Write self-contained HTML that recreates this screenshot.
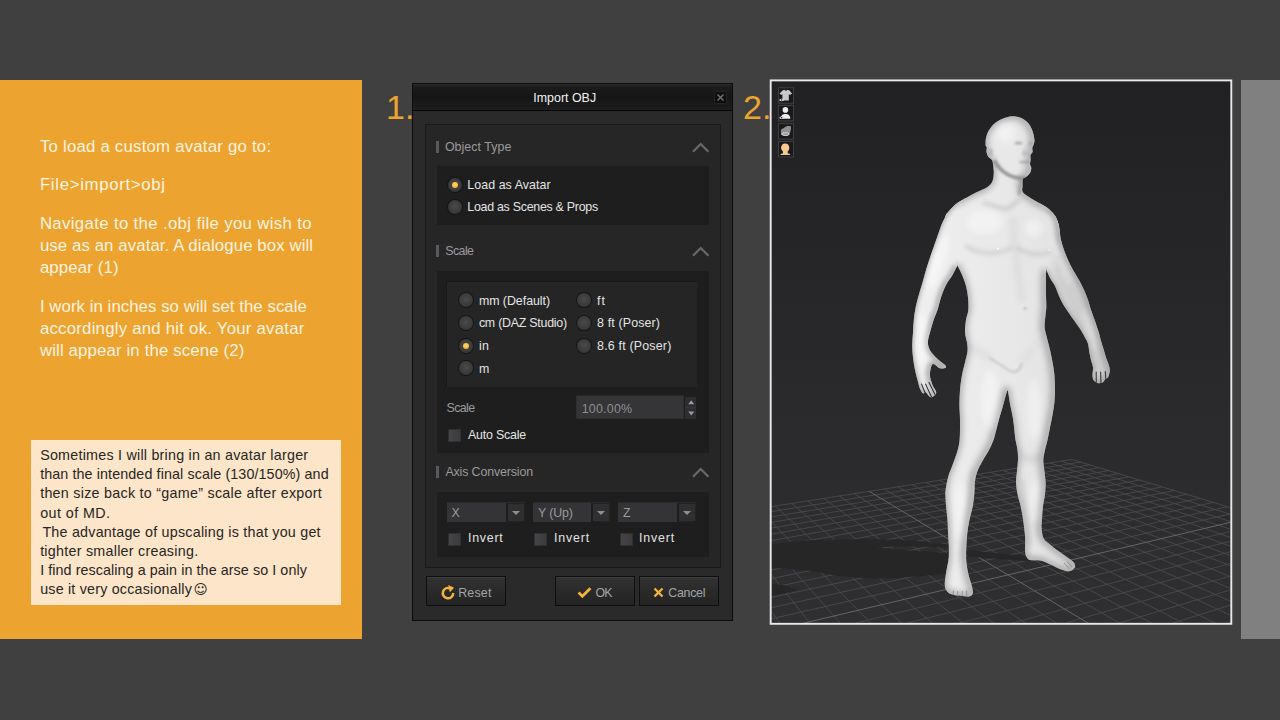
<!DOCTYPE html>
<html lang="en">
<head>
<meta charset="utf-8">
<title>Import OBJ avatar</title>
<style>
*{box-sizing:border-box;margin:0;padding:0}
html,body{width:1280px;height:720px;overflow:hidden;background:#404040}
body{position:relative;font-family:"Liberation Sans",sans-serif}
.abs{position:absolute}
#orange{left:0;top:80px;width:362px;height:559px;background:#eda32f}
#rightbar{left:1241px;top:80px;width:39px;height:559px;background:#808080}
.ln{position:absolute;left:40px;white-space:nowrap;color:#fdf3e1;font-size:16.8px;line-height:22px;height:22px;transform-origin:0 50%}
#cream{left:31px;top:440px;width:310px;height:165px;background:#fce5c8}
.cl{position:absolute;left:9px;white-space:nowrap;color:#262626;font-size:14.3px;line-height:19px;height:19px;transform-origin:0 50%}
.num{position:absolute;color:#eda32f;font-size:34px;line-height:32px;white-space:nowrap;transform-origin:0 50%}
/* dialog */
#dlg{left:412px;top:83px;width:321px;height:538px;background:#2a2a2b;border:1px solid #0c0c0c;font-size:12px;color:#dcdcdc}
#dlg .t{position:absolute;white-space:nowrap;line-height:14px;height:14px;transform-origin:0 50%}
#title{left:0;top:0;width:319px;height:27px;background:linear-gradient(#2a2a2b 0,#1c1c1d 10%,#151516 50%,#1e1e1f);border-bottom:1px solid #080808}
#inner{left:12px;top:40px;width:296px;height:444px;background:#262627;border:1px solid #1a1a1b}
.sub{position:absolute;background:#1e1e1f}
.grp{position:absolute;background:#252526;border-top:1px solid #181819;border-left:1px solid #181819}
.bar{position:absolute;width:3px;height:12px;background:#5a5a5c}
.sec{color:#9c9c9e}
.radio{position:absolute;width:14px;height:14px;border-radius:50%;background:radial-gradient(circle at 50% 45%,#4a4a4b 0,#3a3a3b 60%,#2a2a2b 100%);box-shadow:0 0 0 1px #151516}
.radio.on::after{content:"";position:absolute;left:4px;top:4px;width:6px;height:6px;border-radius:50%;background:radial-gradient(circle at 50% 40%,#ffd76a,#f0a820)}
.chk{position:absolute;width:13px;height:13px;background:linear-gradient(90deg,#454547,#3b3b3d);border:1px solid #303032}
.combo{position:absolute;height:20px;background:#343436;border-top:1px solid #2a2a2b}
.combo i{position:absolute;right:0;top:0;width:19px;height:19px;border:1px solid #222223;border-left:2px solid #1d1d1e;background:#2f2f31}
.combo i::after{content:"";position:absolute;left:4px;top:7px;border:4px solid transparent;border-top:4.5px solid #909092;border-bottom:none}
.btn{position:absolute;height:30px;background:linear-gradient(#323233,#232324);border:1px solid #0e0e0f;box-shadow:inset 0 1px 0 #3d3d3e}
.btn .t{color:#a0a0a2;font-size:13px}
#vp{left:769px;top:79px;width:463px;height:546px;border:2px solid #e8e8e8;background:#2b2b2d;overflow:hidden}
</style>
</head>
<body>
<div id="orange" class="abs">
  <div class="ln" id="l1" style="left:39.90px;top:55.88px;letter-spacing:0.220px">To load a custom avatar go to:</div>
  <div class="ln" id="l2" style="left:39.90px;top:93.88px;letter-spacing:0.681px">File&gt;import&gt;obj</div>
  <div class="ln" id="l3" style="left:39.90px;top:132.63px;letter-spacing:0.344px">Navigate to the .obj file you wish to</div>
  <div class="ln" id="l4" style="left:39.90px;top:154.78px;letter-spacing:0.099px">use as an avatar. A dialogue box will</div>
  <div class="ln" id="l5" style="left:39.90px;top:176.88px;letter-spacing:0.140px">appear (1)</div>
  <div class="ln" id="l6" style="left:39.90px;top:215.63px;letter-spacing:0.056px">I work in inches so will set the scale</div>
  <div class="ln" id="l7" style="left:39.90px;top:237.78px;letter-spacing:0.232px">accordingly and hit ok. Your avatar</div>
  <div class="ln" id="l8" style="left:39.90px;top:260.13px;letter-spacing:0.144px">will appear in the scene (2)</div>
</div>
<div id="cream" class="abs">
  <div class="cl" id="c1" style="left:9.15px;top:6.05px;letter-spacing:0.237px">Sometimes I will bring in an avatar larger</div>
  <div class="cl" id="c2" style="left:9.15px;top:25.30px;letter-spacing:0.109px">than the intended final scale (130/150%) and</div>
  <div class="cl" id="c3" style="left:9.15px;top:44.45px;letter-spacing:0.274px">then size back to “game” scale after export</div>
  <div class="cl" id="c4" style="left:9.15px;top:63.65px;letter-spacing:0.444px">out of MD.</div>
  <div class="cl" id="c5" style="left:11.40px;top:82.80px;letter-spacing:0.233px">The advantage of upscaling is that you get</div>
  <div class="cl" id="c6" style="left:9.15px;top:101.95px;letter-spacing:0.258px">tighter smaller creasing.</div>
  <div class="cl" id="c7" style="left:9.15px;top:121.15px;letter-spacing:0.083px">I find rescaling a pain in the arse so I only</div>
  <div class="cl" id="c8" style="left:9.15px;top:140.45px;letter-spacing:0.204px">use it very occasionally<span style="position:absolute;left:153.4px;top:0px;font-family:'DejaVu Sans',sans-serif;font-size:13.6px;letter-spacing:0">☺</span></div>
</div>
<div class="num abs" id="n1" style="left:386px;top:91.2px">1.</div>
<div class="num abs" id="n2" style="left:743px;top:91.2px">2.</div>
<div id="rightbar" class="abs"></div>
<div id="dlg" class="abs">
  <div id="title" class="abs"><span class="t" id="ttl" style="left:120.25px;top:7.20px;color:#f2f2f2;font-size:12.4px;letter-spacing:0.022px">Import OBJ</span>
    <svg class="abs" style="left:301px;top:7px" width="13" height="13" viewBox="0 0 13 13"><rect x="0.5" y="0.5" width="12" height="12" rx="2" fill="#0e0e0f" stroke="#262627"/><path d="M3.5 3.5l6 6M9.5 3.5l-6 6" stroke="#767678" stroke-width="1.4"/></svg>
  </div>
  <div id="inner" class="abs"></div>
  <!-- Object type -->
  <div class="bar" style="left:23px;top:57px"></div>
  <span class="t" id="s1" style="left:31.90px;top:56.20px;color:#9a9a9c;font-size:12.4px;letter-spacing:0.059px">Object Type</span>
  <svg class="abs" style="left:278px;top:57px" width="19" height="13" viewBox="0 0 19 13"><path d="M2 10.7L9.7 3 17.400 10.700" fill="none" stroke="#69696b" stroke-width="2.2"/></svg>
  <div class="sub" style="left:24px;top:82px;width:272px;height:59px"></div>
  <div class="radio on" style="left:35px;top:94px"></div>
  <span class="t" id="r1" style="left:54.30px;top:93.60px;color:#e4e4e4;font-size:12.4px;letter-spacing:0.065px">Load as Avatar</span>
  <div class="radio" style="left:35px;top:116px"></div>
  <span class="t" id="r2" style="left:54.30px;top:116.30px;color:#e4e4e4;font-size:12.4px;letter-spacing:-0.266px">Load as Scenes &amp; Props</span>
  <!-- Scale -->
  <div class="bar" style="left:23px;top:161px"></div>
  <span class="t" id="s2" style="left:32.20px;top:160.40px;color:#9a9a9c;font-size:12.4px;letter-spacing:-0.550px">Scale</span>
  <svg class="abs" style="left:278px;top:161px" width="19" height="13" viewBox="0 0 19 13"><path d="M2 10.7L9.7 3 17.400 10.700" fill="none" stroke="#69696b" stroke-width="2.2"/></svg>
  <div class="sub" style="left:24px;top:187px;width:272px;height:182px"></div>
  <div class="grp" style="left:33px;top:197px;width:251px;height:106px"></div>
  <div class="radio" style="left:46px;top:209px"></div><span class="t" id="u1" style="left:65.90px;top:209.60px;color:#e4e4e4;font-size:12.4px;letter-spacing:-0.037px">mm (Default)</span>
  <div class="radio" style="left:46px;top:232px"></div><span class="t" id="u2" style="left:65.90px;top:232.30px;color:#e4e4e4;font-size:12.4px;letter-spacing:-0.241px">cm (DAZ Studio)</span>
  <div class="radio on" style="left:46px;top:255px"></div><span class="t" id="u3" style="left:65.90px;top:254.90px;color:#e4e4e4;font-size:12.4px;letter-spacing:0.444px">in</span>
  <div class="radio" style="left:46px;top:277px"></div><span class="t" id="u4" style="left:65.90px;top:277.60px;color:#e4e4e4;font-size:12.4px;letter-spacing:0.000px">m</span>
  <div class="radio" style="left:164px;top:209px"></div><span class="t" id="u5" style="left:184.10px;top:209.60px;color:#e4e4e4;font-size:12.4px;letter-spacing:0.900px">ft</span>
  <div class="radio" style="left:164px;top:232px"></div><span class="t" id="u6" style="left:184.10px;top:232.30px;color:#e4e4e4;font-size:12.4px;letter-spacing:0.146px">8 ft (Poser)</span>
  <div class="radio" style="left:164px;top:255px"></div><span class="t" id="u7" style="left:184.10px;top:254.90px;color:#e4e4e4;font-size:12.4px;letter-spacing:0.198px">8.6 ft (Poser)</span>
  <span class="t" id="s3" style="left:33.50px;top:317.10px;color:#9a9a9c;font-size:12.4px;letter-spacing:-0.600px">Scale</span>
  <div class="abs" style="left:163px;top:311px;width:108px;height:24px;background:#353537;border:1px solid #2e2e30;border-top-color:#262627"></div>
  <span class="t" id="pct" style="left:168.70px;top:318.20px;color:#8e8e90;font-size:12.4px;letter-spacing:0.246px">100.00%</span>
  <div class="abs" style="left:271px;top:312px;width:13px;height:24px;background:#2e2e30;border:1px solid #1e1e1f"></div>
  <svg class="abs" style="left:271.500px;top:313px" width="12" height="22" viewBox="0 0 12 22"><path d="M1 10.800h10" stroke="#3e3e40" stroke-width="1"/><path d="M3.200 7.300L6.200 3.200 9.200 7.300zM3.200 14.600L6.200 18.400 9.200 14.600z" fill="#9a9a9c"/></svg>
  <div class="chk" style="left:35px;top:345px"></div><span class="t" id="as" style="left:55.00px;top:343.90px;color:#e4e4e4;font-size:12.4px;letter-spacing:-0.204px">Auto Scale</span>
  <!-- Axis -->
  <div class="bar" style="left:23px;top:382px"></div>
  <span class="t" id="s4" style="left:32.40px;top:380.80px;color:#9a9a9c;font-size:12.4px;letter-spacing:-0.131px">Axis Conversion</span>
  <svg class="abs" style="left:278px;top:382px" width="19" height="13" viewBox="0 0 19 13"><path d="M2 10.7L9.7 3 17.400 10.700" fill="none" stroke="#69696b" stroke-width="2.2"/></svg>
  <div class="sub" style="left:24px;top:408px;width:272px;height:65px"></div>
  <div class="combo" style="left:34px;top:418px;width:78px"><i></i></div><span class="t" id="x1" style="left:38.50px;top:421.90px;color:#9a9a9c;font-size:12.4px;letter-spacing:0.000px">X</span>
  <div class="combo" style="left:120px;top:418px;width:77px"><i></i></div><span class="t" id="x2" style="left:124.90px;top:421.90px;color:#9a9a9c;font-size:12.4px;letter-spacing:-0.116px">Y (Up)</span>
  <div class="combo" style="left:205px;top:418px;width:78px"><i></i></div><span class="t" id="x3" style="left:210.00px;top:421.90px;color:#9a9a9c;font-size:12.4px;letter-spacing:0.000px">Z</span>
  <div class="chk" style="left:35px;top:449px"></div><span class="t" id="i1" style="left:55.00px;top:446.90px;color:#e4e4e4;font-size:12.4px;letter-spacing:0.760px">Invert</span>
  <div class="chk" style="left:121px;top:449px"></div><span class="t" id="i2" style="left:140.90px;top:446.90px;color:#e4e4e4;font-size:12.4px;letter-spacing:0.860px">Invert</span>
  <div class="chk" style="left:207px;top:449px"></div><span class="t" id="i3" style="left:225.90px;top:446.90px;color:#e4e4e4;font-size:12.4px;letter-spacing:0.860px">Invert</span>
  <!-- buttons -->
  <div class="btn" style="left:13px;top:492px;width:80px"><span class="t" id="b1" style="left:31.20px;top:9.10px;color:#a4a4a6;font-size:12.4px;letter-spacing:0.206px">Reset</span>
    <svg class="abs" style="left:13px;top:7px" width="16" height="17" viewBox="0 0 14 15"><path d="M9.5 4.2A4.6 4.6 0 1 0 11.6 8" fill="none" stroke="#f2b43a" stroke-width="2.2"/><path d="M7.2 0.8L12.4 3.4 8.6 7.2z" fill="#f2b43a"/></svg></div>
  <div class="btn" style="left:142px;top:492px;width:80px"><span class="t" id="b2" style="left:39.60px;top:9.10px;color:#a4a4a6;font-size:12.4px;letter-spacing:-0.906px">OK</span>
    <svg class="abs" style="left:21px;top:9px" width="15" height="13" viewBox="0 0 14 12"><path d="M1.5 6l3.5 3.5L12.5 2" fill="none" stroke="#f2b43a" stroke-width="2.6"/></svg></div>
  <div class="btn" style="left:226px;top:492px;width:80px"><span class="t" id="b3" style="left:28.30px;top:9.10px;color:#a4a4a6;font-size:12.4px;letter-spacing:-0.296px">Cancel</span>
    <svg class="abs" style="left:13px;top:10px" width="11" height="11" viewBox="0 0 11 11"><path d="M1.5 1.5l8 8M9.5 1.5l-8 8" fill="none" stroke="#f2b43a" stroke-width="2.4"/></svg></div>
</div>
<svg class="abs" style="left:0;top:0" width="1280" height="720" viewBox="0 0 1280 720">
<defs>
<clipPath id="vpc"><rect x="771" y="81" width="460" height="543"/></clipPath>
<linearGradient id="bgg" x1="0" y1="80" x2="0" y2="625" gradientUnits="userSpaceOnUse"><stop offset="0" stop-color="#212123"/><stop offset="0.6" stop-color="#2a2a2c"/><stop offset="1" stop-color="#2f2f31"/></linearGradient>
<linearGradient id="skin" x1="910" y1="0" x2="1110" y2="0" gradientUnits="userSpaceOnUse"><stop offset="0" stop-color="#efefef"/><stop offset="0.5" stop-color="#e8e8e8"/><stop offset="1" stop-color="#dedede"/></linearGradient>
<filter id="fb1" filterUnits="userSpaceOnUse" x="760" y="70" width="480" height="560"><feGaussianBlur stdDeviation="1"/></filter>
<filter id="fb2" filterUnits="userSpaceOnUse" x="760" y="70" width="480" height="560"><feGaussianBlur stdDeviation="2"/></filter>
<filter id="fb3" filterUnits="userSpaceOnUse" x="760" y="70" width="480" height="560"><feGaussianBlur stdDeviation="3"/></filter>
<filter id="fb5" filterUnits="userSpaceOnUse" x="760" y="70" width="480" height="560"><feGaussianBlur stdDeviation="5"/></filter>
<filter id="fb05" filterUnits="userSpaceOnUse" x="760" y="70" width="480" height="560"><feGaussianBlur stdDeviation="0.6"/></filter>
<clipPath id="cb"><path d="M1012.0 116.3C1015.0 116.0 1017.7 116.7 1020.0 117.5C1022.3 118.3 1024.3 119.7 1026.0 121.0C1027.7 122.3 1028.9 123.8 1030.0 125.5C1031.1 127.2 1031.8 129.1 1032.5 131.0C1033.2 132.9 1033.7 135.3 1034.0 137.0C1034.3 138.7 1034.6 139.7 1034.5 141.0C1034.4 142.3 1033.9 143.8 1033.5 145.0C1033.1 146.2 1032.5 146.8 1032.3 148.0C1032.1 149.2 1032.9 150.8 1032.6 152.0C1032.3 153.2 1030.8 153.7 1030.5 155.0C1030.2 156.3 1030.7 158.5 1030.6 160.0C1030.5 161.5 1029.9 162.7 1030.0 164.0C1030.1 165.3 1031.3 166.5 1031.3 168.0C1031.3 169.5 1030.9 171.5 1030.0 173.0C1029.1 174.5 1027.2 176.0 1026.0 177.0C1024.8 178.0 1023.4 177.5 1022.8 179.0C1022.2 180.5 1022.5 183.8 1022.5 186.0C1022.5 188.2 1021.6 190.2 1022.7 192.0C1023.8 193.8 1026.3 195.2 1029.0 197.0C1031.7 198.8 1035.9 201.2 1039.0 203.0C1042.1 204.8 1045.0 206.1 1047.5 208.0C1050.0 209.9 1052.3 212.3 1054.0 214.5C1055.7 216.7 1056.6 218.4 1057.5 221.0C1058.4 223.6 1059.4 226.0 1059.5 230.0C1059.6 234.0 1059.2 240.3 1058.0 245.0C1056.8 249.7 1053.9 253.8 1052.0 258.0C1050.1 262.2 1047.5 265.9 1046.5 270.0C1045.5 274.1 1046.1 278.3 1046.0 282.5C1045.9 286.7 1046.0 290.8 1046.0 295.0C1046.0 299.2 1046.5 303.3 1046.3 307.5C1046.1 311.7 1045.3 316.5 1045.0 320.0C1044.7 323.5 1044.3 325.4 1044.8 328.8C1045.2 332.1 1046.5 336.0 1047.5 340.0C1048.5 344.0 1049.7 348.3 1050.6 352.5C1051.5 356.7 1052.4 361.2 1053.0 365.0C1053.6 368.8 1054.1 370.8 1054.4 375.0C1054.7 379.2 1055.0 385.4 1055.0 390.0C1055.0 394.6 1054.8 398.3 1054.4 402.5C1054.0 406.7 1053.2 410.8 1052.5 415.0C1051.8 419.2 1050.8 423.3 1050.0 427.5C1049.2 431.7 1048.3 436.2 1047.5 440.0C1046.7 443.8 1045.7 446.7 1045.0 450.0C1044.3 453.3 1043.4 456.5 1043.3 460.0C1043.2 463.5 1044.0 467.2 1044.4 471.0C1044.8 474.8 1045.5 478.7 1045.6 482.5C1045.7 486.3 1045.4 490.1 1045.0 494.0C1044.6 497.9 1043.5 501.8 1043.0 506.0C1042.5 510.2 1042.2 515.3 1042.0 519.0C1041.8 522.7 1041.2 524.7 1041.5 528.0C1041.8 531.3 1042.3 536.0 1043.8 538.8C1045.2 541.5 1047.5 542.3 1050.0 544.4C1052.5 546.5 1055.8 549.1 1058.8 551.2C1061.7 553.4 1065.0 555.6 1067.5 557.5C1070.0 559.4 1072.5 560.9 1073.8 562.5C1075.0 564.1 1075.4 565.6 1075.0 567.0C1074.6 568.4 1072.7 569.9 1071.2 570.6C1069.8 571.3 1068.5 571.4 1066.2 571.0C1064.0 570.6 1060.4 569.2 1057.5 568.0C1054.6 566.8 1051.7 565.0 1048.8 563.8C1045.8 562.5 1043.1 561.2 1040.0 560.6C1036.9 560.0 1032.3 560.7 1030.0 560.0C1027.7 559.3 1027.1 557.9 1026.2 556.2C1025.4 554.6 1025.2 552.7 1025.0 550.0C1024.8 547.3 1025.3 543.3 1025.2 540.0C1025.2 536.7 1024.8 533.5 1024.4 530.0C1024.0 526.5 1023.6 523.0 1023.0 519.0C1022.4 515.0 1021.5 510.2 1020.6 506.0C1019.7 501.8 1018.3 497.9 1017.5 494.0C1016.7 490.1 1016.1 486.3 1016.0 482.5C1015.9 478.7 1016.7 474.8 1017.0 471.0C1017.3 467.2 1017.9 463.5 1018.0 460.0C1018.1 456.5 1017.9 453.3 1017.5 450.0C1017.1 446.7 1016.0 442.9 1015.5 440.0C1015.0 437.1 1015.0 436.0 1014.6 432.5C1014.2 429.0 1013.8 423.5 1013.0 418.8C1012.2 414.0 1010.8 408.1 1010.0 403.8C1009.2 399.4 1008.6 394.7 1008.2 392.5C1007.8 390.3 1007.9 390.4 1007.6 390.5C1007.3 390.6 1007.4 390.2 1006.5 393.0C1005.6 395.8 1003.8 403.0 1002.5 407.5C1001.2 412.0 999.8 416.1 998.8 420.0C997.7 423.9 996.9 427.7 996.0 431.0C995.1 434.3 994.7 436.8 993.5 440.0C992.3 443.2 990.8 446.5 989.0 450.0C987.2 453.5 984.4 457.5 982.5 461.0C980.6 464.5 978.8 467.7 977.5 471.0C976.2 474.3 975.5 477.4 975.0 481.0C974.5 484.6 974.7 488.5 974.4 492.5C974.1 496.5 973.7 500.8 973.0 505.0C972.3 509.2 970.8 513.7 970.0 517.5C969.2 521.3 968.5 524.9 968.0 528.0C967.5 531.1 967.3 532.8 967.0 536.2C966.7 539.7 966.4 544.8 966.2 548.8C966.1 552.7 966.0 556.5 966.2 560.0C966.5 563.5 966.9 566.7 967.5 570.0C968.1 573.3 969.2 577.1 970.0 580.0C970.8 582.9 971.8 585.2 972.2 587.5C972.7 589.8 973.1 592.5 972.5 594.0C971.9 595.5 970.4 596.2 968.8 596.5C967.1 596.8 964.5 596.1 962.5 596.0C960.5 595.9 959.1 596.0 957.0 595.6C954.9 595.2 951.8 594.7 950.0 593.8C948.2 592.8 947.1 591.5 946.2 590.0C945.4 588.5 944.9 587.3 944.8 585.0C944.6 582.7 945.2 578.9 945.6 576.0C946.0 573.1 946.5 570.6 947.0 567.5C947.5 564.4 948.5 561.2 948.8 557.5C949.0 553.8 948.9 549.2 948.8 545.0C948.6 540.8 948.2 536.7 948.0 532.5C947.8 528.3 947.9 525.0 947.5 520.0C947.1 515.0 946.1 507.5 945.8 502.5C945.5 497.5 945.2 494.2 945.6 490.0C946.0 485.8 946.9 481.7 948.0 477.5C949.1 473.3 951.0 469.2 952.5 465.0C954.0 460.8 955.8 456.7 957.0 452.5C958.2 448.3 959.1 445.4 959.6 440.0C960.1 434.6 960.0 425.8 960.0 420.0C960.0 414.2 959.4 410.0 959.4 405.0C959.4 400.0 959.6 395.0 960.0 390.0C960.4 385.0 961.2 379.6 962.0 375.0C962.8 370.4 964.1 366.5 965.0 362.5C965.9 358.5 967.2 354.3 967.5 351.0C967.8 347.7 967.4 345.6 967.0 342.5C966.6 339.4 965.2 336.2 965.0 332.5C964.8 328.8 965.5 323.8 966.0 320.0C966.5 316.2 968.0 313.8 968.3 310.0C968.6 306.2 968.4 301.5 968.0 297.5C967.6 293.5 966.9 289.6 966.0 286.0C965.1 282.4 963.9 279.4 962.5 276.0C961.1 272.6 959.6 269.9 957.5 265.6C955.4 261.3 951.9 255.6 950.0 250.0C948.1 244.4 946.8 237.4 946.0 232.0C945.2 226.6 944.3 221.2 945.0 217.5C945.7 213.8 947.9 212.4 950.0 210.0C952.1 207.6 954.8 205.0 957.5 203.0C960.2 201.0 962.9 199.8 966.0 198.0C969.1 196.2 972.4 194.3 976.0 192.5C979.6 190.7 984.8 188.9 987.5 187.0C990.2 185.1 991.5 183.4 992.5 181.0C993.5 178.6 993.7 175.3 993.8 172.5C993.8 169.7 993.3 166.1 993.0 164.0C992.7 161.9 992.8 161.2 992.0 160.0C991.2 158.8 989.4 158.3 988.5 157.0C987.6 155.7 986.8 153.6 986.5 152.0C986.2 150.4 986.9 148.7 986.8 147.5C986.6 146.3 985.7 146.6 985.6 145.0C985.5 143.4 985.5 140.3 986.0 138.0C986.5 135.7 987.2 133.3 988.5 131.0C989.8 128.7 991.8 126.0 994.0 124.0C996.2 122.0 999.0 120.3 1002.0 119.0C1005.0 117.7 1009.0 116.5 1012.0 116.3Z"/></clipPath>
<clipPath id="cl"><path d="M966.0 198.0C964.6 198.8 960.2 201.0 957.5 203.0C954.8 205.0 952.1 207.6 950.0 210.0C947.9 212.4 946.5 214.8 945.0 217.5C943.5 220.2 942.2 222.9 941.0 226.0C939.8 229.1 938.7 232.7 937.5 236.0C936.3 239.3 935.2 242.7 934.0 246.0C932.8 249.3 931.8 252.0 930.5 256.0C929.2 260.0 927.3 265.6 926.0 270.0C924.7 274.4 923.7 278.3 922.5 282.5C921.3 286.7 919.9 290.8 918.8 295.0C917.6 299.2 916.4 303.3 915.6 307.5C914.8 311.7 914.2 315.8 913.8 320.0C913.3 324.2 913.2 328.3 913.0 332.5C912.8 336.7 912.2 340.8 912.2 345.0C912.2 349.2 912.5 353.3 913.0 357.5C913.5 361.7 914.2 366.2 915.0 370.0C915.8 373.8 916.7 376.9 917.5 380.0C918.3 383.1 919.1 386.5 920.0 388.8C920.9 391.0 922.1 393.0 923.0 393.5C923.9 394.0 924.3 391.4 925.5 392.0C926.7 392.6 928.6 396.3 930.0 397.0C931.4 397.7 932.7 396.8 933.8 396.0C934.8 395.2 936.5 393.8 936.2 392.0C936.0 390.2 933.5 387.7 932.5 385.0C931.5 382.3 930.2 378.9 930.0 376.0C929.8 373.1 930.4 369.5 931.0 367.5C931.6 365.5 932.0 363.9 933.5 364.0C935.0 364.1 938.0 367.7 940.0 368.3C942.0 368.9 944.8 368.4 945.6 367.8C946.4 367.2 946.1 366.3 945.0 365.0C943.9 363.7 940.8 361.9 938.8 360.0C936.7 358.1 934.2 355.8 932.5 353.8C930.8 351.7 929.5 349.6 928.8 347.5C928.0 345.4 927.8 343.5 928.0 341.0C928.2 338.5 929.1 335.8 930.0 332.5C930.9 329.2 932.0 324.8 933.3 321.0C934.5 317.2 936.2 313.9 937.5 310.0C938.8 306.1 939.6 301.7 941.0 297.5C942.4 293.3 944.1 288.8 946.0 285.0C947.9 281.2 950.6 278.2 952.5 275.0C954.4 271.8 956.7 267.2 957.5 265.6L966 245L975 215Z"/></clipPath>
<clipPath id="cr"><path d="M1039.0 203.0C1040.4 203.8 1045.0 206.1 1047.5 208.0C1050.0 209.9 1052.3 212.3 1054.0 214.5C1055.7 216.7 1056.6 218.4 1057.5 221.0C1058.4 223.6 1058.9 226.8 1059.5 230.0C1060.1 233.2 1060.2 236.7 1061.0 240.0C1061.8 243.3 1062.8 246.7 1064.0 250.0C1065.2 253.3 1066.5 256.7 1068.0 260.0C1069.5 263.3 1071.2 266.7 1073.0 270.0C1074.8 273.3 1077.2 276.7 1079.0 280.0C1080.8 283.3 1082.5 286.7 1084.0 290.0C1085.5 293.3 1086.8 296.7 1088.0 300.0C1089.2 303.3 1089.8 306.5 1091.0 310.0C1092.2 313.5 1093.7 317.2 1095.0 321.0C1096.3 324.8 1097.8 329.2 1098.8 332.5C1099.8 335.8 1100.2 338.1 1101.0 341.0C1101.8 343.9 1102.9 347.2 1103.8 350.0C1104.6 352.8 1105.2 355.0 1106.0 357.5C1106.8 360.0 1108.1 362.8 1108.8 365.0C1109.4 367.2 1109.9 368.9 1109.8 371.0C1109.6 373.1 1108.7 376.2 1108.0 377.5C1107.3 378.8 1106.5 377.9 1105.6 378.8C1104.7 379.6 1103.8 381.8 1102.5 382.5C1101.2 383.2 1099.0 383.4 1097.5 383.0C1096.0 382.6 1094.3 381.3 1093.5 380.0C1092.7 378.7 1092.6 377.1 1092.5 375.0C1092.4 372.9 1093.2 370.0 1093.0 367.5C1092.8 365.0 1091.6 362.5 1091.0 360.0C1090.4 357.5 1089.9 355.2 1089.4 352.5C1088.9 349.8 1088.7 346.2 1088.0 343.8C1087.3 341.2 1086.3 340.0 1085.0 337.5C1083.7 335.0 1081.9 331.7 1080.0 328.8C1078.1 325.8 1075.8 323.0 1073.8 320.0C1071.7 317.0 1069.3 313.7 1067.5 311.0C1065.7 308.3 1064.4 306.5 1063.0 304.0C1061.6 301.5 1060.3 299.0 1059.0 296.0C1057.7 293.0 1056.5 289.0 1055.0 286.0C1053.5 283.0 1051.4 280.7 1050.0 278.0C1048.6 275.3 1047.1 271.3 1046.5 270.0L1040 250L1036 222Z"/></clipPath>
</defs>
<g clip-path="url(#vpc)">
<rect x="770" y="80" width="462" height="545" fill="url(#bgg)"/>
<g fill="none"><path d="M588.8 535.3L676.9 1171.8M588.8 535.3L1072.0 459.5M609.5 532.0L747.9 1132.9M589.6 540.7L1080.7 462.1M629.6 528.9L813.1 1097.1M590.4 546.4L1089.7 464.9M649.3 525.8L873.1 1064.1M591.2 552.4L1098.9 467.7M668.5 522.8L928.6 1033.7M592.1 558.7L1108.6 470.6M687.3 519.8L980.0 1005.5M593.0 565.3L1118.5 473.6M705.7 516.9L1027.8 979.2M594.0 572.2L1128.9 476.8M723.7 514.1L1072.3 954.8M595.0 579.6L1139.6 480.0M741.3 511.4L1113.9 931.9M596.0 587.3L1150.7 483.4M758.5 508.7L1152.9 910.6M597.2 595.5L1162.3 486.9M775.3 506.0L1189.4 890.5M598.4 604.2L1174.3 490.6M791.8 503.4L1223.7 871.6M599.7 613.4L1186.8 494.3M807.9 500.9L1256.1 853.9M601.0 623.2L1199.8 498.3M823.7 498.4L1286.6 837.1M602.5 633.7L1213.4 502.4M839.2 496.0L1315.5 821.3M604.0 644.8L1227.6 506.7M854.3 493.6L1342.8 806.3M605.6 656.7L1242.3 511.2M883.8 489.0L1393.2 778.6M609.3 683.3L1274.0 520.8M898.0 486.8L1416.5 765.8M611.4 698.1L1290.9 525.9M912.0 484.6L1438.7 753.6M613.6 714.1L1308.6 531.3M925.8 482.4L1459.9 742.0M616.0 731.4L1327.3 537.0M939.2 480.3L1480.1 730.9M618.6 750.3L1346.8 542.9M952.4 478.2L1499.4 720.3M621.5 771.0L1367.4 549.2M965.4 476.2L1517.8 710.2M624.6 793.6L1389.1 555.8M978.1 474.2L1535.4 700.5M628.0 818.5L1412.0 562.7M990.6 472.3L1552.3 691.3M631.9 846.1L1436.2 570.0M1002.9 470.3L1568.5 682.4M636.1 876.9L1461.8 577.8M1014.9 468.4L1584.0 673.8M640.9 911.3L1488.9 586.0M1026.7 466.6L1599.0 665.7M646.2 950.1L1517.7 594.8M1038.4 464.8L1613.3 657.8M652.4 994.2L1548.3 604.1M1049.8 463.0L1627.1 650.2M659.3 1044.8L1580.9 614.0M1061.0 461.2L1640.4 642.9M667.5 1103.3L1615.8 624.6M1072.0 459.5L1653.1 635.9M676.9 1171.8L1653.1 635.9" stroke="#4a4a4d" stroke-width="0.9"/><path d="M869.2 491.3L1368.6 792.1M607.4 669.5L1257.8 515.9" stroke="#656568" stroke-width="1"/></g>
<g fill="#252527" filter="url(#fb05)"><path d="M771 544.500L790 542 812 540.200 845 539.200 872 539 900 540 919 541.300 948 544.500 948 547.200 905 546.300 873 547.300 905 550.200 948 553 948 573 919 576.300 890 578.200 872 578.400 840 576.300 812 571 790 569 771 567.800Z"/><path d="M966 550L1000 553.500 1026 556 1030 561 1000 559 968 556.500Z"/><path d="M771 583.500L785 585.500 797.500 590 785 593 771 595.500Z"/></g>
<g fill="url(#skin)"><path d="M1012.0 116.3C1015.0 116.0 1017.7 116.7 1020.0 117.5C1022.3 118.3 1024.3 119.7 1026.0 121.0C1027.7 122.3 1028.9 123.8 1030.0 125.5C1031.1 127.2 1031.8 129.1 1032.5 131.0C1033.2 132.9 1033.7 135.3 1034.0 137.0C1034.3 138.7 1034.6 139.7 1034.5 141.0C1034.4 142.3 1033.9 143.8 1033.5 145.0C1033.1 146.2 1032.5 146.8 1032.3 148.0C1032.1 149.2 1032.9 150.8 1032.6 152.0C1032.3 153.2 1030.8 153.7 1030.5 155.0C1030.2 156.3 1030.7 158.5 1030.6 160.0C1030.5 161.5 1029.9 162.7 1030.0 164.0C1030.1 165.3 1031.3 166.5 1031.3 168.0C1031.3 169.5 1030.9 171.5 1030.0 173.0C1029.1 174.5 1027.2 176.0 1026.0 177.0C1024.8 178.0 1023.4 177.5 1022.8 179.0C1022.2 180.5 1022.5 183.8 1022.5 186.0C1022.5 188.2 1021.6 190.2 1022.7 192.0C1023.8 193.8 1026.3 195.2 1029.0 197.0C1031.7 198.8 1035.9 201.2 1039.0 203.0C1042.1 204.8 1045.0 206.1 1047.5 208.0C1050.0 209.9 1052.3 212.3 1054.0 214.5C1055.7 216.7 1056.6 218.4 1057.5 221.0C1058.4 223.6 1059.4 226.0 1059.5 230.0C1059.6 234.0 1059.2 240.3 1058.0 245.0C1056.8 249.7 1053.9 253.8 1052.0 258.0C1050.1 262.2 1047.5 265.9 1046.5 270.0C1045.5 274.1 1046.1 278.3 1046.0 282.5C1045.9 286.7 1046.0 290.8 1046.0 295.0C1046.0 299.2 1046.5 303.3 1046.3 307.5C1046.1 311.7 1045.3 316.5 1045.0 320.0C1044.7 323.5 1044.3 325.4 1044.8 328.8C1045.2 332.1 1046.5 336.0 1047.5 340.0C1048.5 344.0 1049.7 348.3 1050.6 352.5C1051.5 356.7 1052.4 361.2 1053.0 365.0C1053.6 368.8 1054.1 370.8 1054.4 375.0C1054.7 379.2 1055.0 385.4 1055.0 390.0C1055.0 394.6 1054.8 398.3 1054.4 402.5C1054.0 406.7 1053.2 410.8 1052.5 415.0C1051.8 419.2 1050.8 423.3 1050.0 427.5C1049.2 431.7 1048.3 436.2 1047.5 440.0C1046.7 443.8 1045.7 446.7 1045.0 450.0C1044.3 453.3 1043.4 456.5 1043.3 460.0C1043.2 463.5 1044.0 467.2 1044.4 471.0C1044.8 474.8 1045.5 478.7 1045.6 482.5C1045.7 486.3 1045.4 490.1 1045.0 494.0C1044.6 497.9 1043.5 501.8 1043.0 506.0C1042.5 510.2 1042.2 515.3 1042.0 519.0C1041.8 522.7 1041.2 524.7 1041.5 528.0C1041.8 531.3 1042.3 536.0 1043.8 538.8C1045.2 541.5 1047.5 542.3 1050.0 544.4C1052.5 546.5 1055.8 549.1 1058.8 551.2C1061.7 553.4 1065.0 555.6 1067.5 557.5C1070.0 559.4 1072.5 560.9 1073.8 562.5C1075.0 564.1 1075.4 565.6 1075.0 567.0C1074.6 568.4 1072.7 569.9 1071.2 570.6C1069.8 571.3 1068.5 571.4 1066.2 571.0C1064.0 570.6 1060.4 569.2 1057.5 568.0C1054.6 566.8 1051.7 565.0 1048.8 563.8C1045.8 562.5 1043.1 561.2 1040.0 560.6C1036.9 560.0 1032.3 560.7 1030.0 560.0C1027.7 559.3 1027.1 557.9 1026.2 556.2C1025.4 554.6 1025.2 552.7 1025.0 550.0C1024.8 547.3 1025.3 543.3 1025.2 540.0C1025.2 536.7 1024.8 533.5 1024.4 530.0C1024.0 526.5 1023.6 523.0 1023.0 519.0C1022.4 515.0 1021.5 510.2 1020.6 506.0C1019.7 501.8 1018.3 497.9 1017.5 494.0C1016.7 490.1 1016.1 486.3 1016.0 482.5C1015.9 478.7 1016.7 474.8 1017.0 471.0C1017.3 467.2 1017.9 463.5 1018.0 460.0C1018.1 456.5 1017.9 453.3 1017.5 450.0C1017.1 446.7 1016.0 442.9 1015.5 440.0C1015.0 437.1 1015.0 436.0 1014.6 432.5C1014.2 429.0 1013.8 423.5 1013.0 418.8C1012.2 414.0 1010.8 408.1 1010.0 403.8C1009.2 399.4 1008.6 394.7 1008.2 392.5C1007.8 390.3 1007.9 390.4 1007.6 390.5C1007.3 390.6 1007.4 390.2 1006.5 393.0C1005.6 395.8 1003.8 403.0 1002.5 407.5C1001.2 412.0 999.8 416.1 998.8 420.0C997.7 423.9 996.9 427.7 996.0 431.0C995.1 434.3 994.7 436.8 993.5 440.0C992.3 443.2 990.8 446.5 989.0 450.0C987.2 453.5 984.4 457.5 982.5 461.0C980.6 464.5 978.8 467.7 977.5 471.0C976.2 474.3 975.5 477.4 975.0 481.0C974.5 484.6 974.7 488.5 974.4 492.5C974.1 496.5 973.7 500.8 973.0 505.0C972.3 509.2 970.8 513.7 970.0 517.5C969.2 521.3 968.5 524.9 968.0 528.0C967.5 531.1 967.3 532.8 967.0 536.2C966.7 539.7 966.4 544.8 966.2 548.8C966.1 552.7 966.0 556.5 966.2 560.0C966.5 563.5 966.9 566.7 967.5 570.0C968.1 573.3 969.2 577.1 970.0 580.0C970.8 582.9 971.8 585.2 972.2 587.5C972.7 589.8 973.1 592.5 972.5 594.0C971.9 595.5 970.4 596.2 968.8 596.5C967.1 596.8 964.5 596.1 962.5 596.0C960.5 595.9 959.1 596.0 957.0 595.6C954.9 595.2 951.8 594.7 950.0 593.8C948.2 592.8 947.1 591.5 946.2 590.0C945.4 588.5 944.9 587.3 944.8 585.0C944.6 582.7 945.2 578.9 945.6 576.0C946.0 573.1 946.5 570.6 947.0 567.5C947.5 564.4 948.5 561.2 948.8 557.5C949.0 553.8 948.9 549.2 948.8 545.0C948.6 540.8 948.2 536.7 948.0 532.5C947.8 528.3 947.9 525.0 947.5 520.0C947.1 515.0 946.1 507.5 945.8 502.5C945.5 497.5 945.2 494.2 945.6 490.0C946.0 485.8 946.9 481.7 948.0 477.5C949.1 473.3 951.0 469.2 952.5 465.0C954.0 460.8 955.8 456.7 957.0 452.5C958.2 448.3 959.1 445.4 959.6 440.0C960.1 434.6 960.0 425.8 960.0 420.0C960.0 414.2 959.4 410.0 959.4 405.0C959.4 400.0 959.6 395.0 960.0 390.0C960.4 385.0 961.2 379.6 962.0 375.0C962.8 370.4 964.1 366.5 965.0 362.5C965.9 358.5 967.2 354.3 967.5 351.0C967.8 347.7 967.4 345.6 967.0 342.5C966.6 339.4 965.2 336.2 965.0 332.5C964.8 328.8 965.5 323.8 966.0 320.0C966.5 316.2 968.0 313.8 968.3 310.0C968.6 306.2 968.4 301.5 968.0 297.5C967.6 293.5 966.9 289.6 966.0 286.0C965.1 282.4 963.9 279.4 962.5 276.0C961.1 272.6 959.6 269.9 957.5 265.6C955.4 261.3 951.9 255.6 950.0 250.0C948.1 244.4 946.8 237.4 946.0 232.0C945.2 226.6 944.3 221.2 945.0 217.5C945.7 213.8 947.9 212.4 950.0 210.0C952.1 207.6 954.8 205.0 957.5 203.0C960.2 201.0 962.9 199.8 966.0 198.0C969.1 196.2 972.4 194.3 976.0 192.5C979.6 190.7 984.8 188.9 987.5 187.0C990.2 185.1 991.5 183.4 992.5 181.0C993.5 178.6 993.7 175.3 993.8 172.5C993.8 169.7 993.3 166.1 993.0 164.0C992.7 161.9 992.8 161.2 992.0 160.0C991.2 158.8 989.4 158.3 988.5 157.0C987.6 155.7 986.8 153.6 986.5 152.0C986.2 150.4 986.9 148.7 986.8 147.5C986.6 146.3 985.7 146.6 985.6 145.0C985.5 143.4 985.5 140.3 986.0 138.0C986.5 135.7 987.2 133.3 988.5 131.0C989.8 128.7 991.8 126.0 994.0 124.0C996.2 122.0 999.0 120.3 1002.0 119.0C1005.0 117.7 1009.0 116.5 1012.0 116.3Z"/><path d="M966.0 198.0C964.6 198.8 960.2 201.0 957.5 203.0C954.8 205.0 952.1 207.6 950.0 210.0C947.9 212.4 946.5 214.8 945.0 217.5C943.5 220.2 942.2 222.9 941.0 226.0C939.8 229.1 938.7 232.7 937.5 236.0C936.3 239.3 935.2 242.7 934.0 246.0C932.8 249.3 931.8 252.0 930.5 256.0C929.2 260.0 927.3 265.6 926.0 270.0C924.7 274.4 923.7 278.3 922.5 282.5C921.3 286.7 919.9 290.8 918.8 295.0C917.6 299.2 916.4 303.3 915.6 307.5C914.8 311.7 914.2 315.8 913.8 320.0C913.3 324.2 913.2 328.3 913.0 332.5C912.8 336.7 912.2 340.8 912.2 345.0C912.2 349.2 912.5 353.3 913.0 357.5C913.5 361.7 914.2 366.2 915.0 370.0C915.8 373.8 916.7 376.9 917.5 380.0C918.3 383.1 919.1 386.5 920.0 388.8C920.9 391.0 922.1 393.0 923.0 393.5C923.9 394.0 924.3 391.4 925.5 392.0C926.7 392.6 928.6 396.3 930.0 397.0C931.4 397.7 932.7 396.8 933.8 396.0C934.8 395.2 936.5 393.8 936.2 392.0C936.0 390.2 933.5 387.7 932.5 385.0C931.5 382.3 930.2 378.9 930.0 376.0C929.8 373.1 930.4 369.5 931.0 367.5C931.6 365.5 932.0 363.9 933.5 364.0C935.0 364.1 938.0 367.7 940.0 368.3C942.0 368.9 944.8 368.4 945.6 367.8C946.4 367.2 946.1 366.3 945.0 365.0C943.9 363.7 940.8 361.9 938.8 360.0C936.7 358.1 934.2 355.8 932.5 353.8C930.8 351.7 929.5 349.6 928.8 347.5C928.0 345.4 927.8 343.5 928.0 341.0C928.2 338.5 929.1 335.8 930.0 332.5C930.9 329.2 932.0 324.8 933.3 321.0C934.5 317.2 936.2 313.9 937.5 310.0C938.8 306.1 939.6 301.7 941.0 297.5C942.4 293.3 944.1 288.8 946.0 285.0C947.9 281.2 950.6 278.2 952.5 275.0C954.4 271.8 956.7 267.2 957.5 265.6L966 245L975 215Z"/><path d="M1039.0 203.0C1040.4 203.8 1045.0 206.1 1047.5 208.0C1050.0 209.9 1052.3 212.3 1054.0 214.5C1055.7 216.7 1056.6 218.4 1057.5 221.0C1058.4 223.6 1058.9 226.8 1059.5 230.0C1060.1 233.2 1060.2 236.7 1061.0 240.0C1061.8 243.3 1062.8 246.7 1064.0 250.0C1065.2 253.3 1066.5 256.7 1068.0 260.0C1069.5 263.3 1071.2 266.7 1073.0 270.0C1074.8 273.3 1077.2 276.7 1079.0 280.0C1080.8 283.3 1082.5 286.7 1084.0 290.0C1085.5 293.3 1086.8 296.7 1088.0 300.0C1089.2 303.3 1089.8 306.5 1091.0 310.0C1092.2 313.5 1093.7 317.2 1095.0 321.0C1096.3 324.8 1097.8 329.2 1098.8 332.5C1099.8 335.8 1100.2 338.1 1101.0 341.0C1101.8 343.9 1102.9 347.2 1103.8 350.0C1104.6 352.8 1105.2 355.0 1106.0 357.5C1106.8 360.0 1108.1 362.8 1108.8 365.0C1109.4 367.2 1109.9 368.9 1109.8 371.0C1109.6 373.1 1108.7 376.2 1108.0 377.5C1107.3 378.8 1106.5 377.9 1105.6 378.8C1104.7 379.6 1103.8 381.8 1102.5 382.5C1101.2 383.2 1099.0 383.4 1097.5 383.0C1096.0 382.6 1094.3 381.3 1093.5 380.0C1092.7 378.7 1092.6 377.1 1092.5 375.0C1092.4 372.9 1093.2 370.0 1093.0 367.5C1092.8 365.0 1091.6 362.5 1091.0 360.0C1090.4 357.5 1089.9 355.2 1089.4 352.5C1088.9 349.8 1088.7 346.2 1088.0 343.8C1087.3 341.2 1086.3 340.0 1085.0 337.5C1083.7 335.0 1081.9 331.7 1080.0 328.8C1078.1 325.8 1075.8 323.0 1073.8 320.0C1071.7 317.0 1069.3 313.7 1067.5 311.0C1065.7 308.3 1064.4 306.5 1063.0 304.0C1061.6 301.5 1060.3 299.0 1059.0 296.0C1057.7 293.0 1056.5 289.0 1055.0 286.0C1053.5 283.0 1051.4 280.7 1050.0 278.0C1048.6 275.3 1047.1 271.3 1046.5 270.0L1040 250L1036 222Z"/></g><g clip-path="url(#cb)"><path d="M957.5 203.0C958.9 202.2 962.9 199.8 966.0 198.0C969.1 196.2 972.4 194.3 976.0 192.5C979.6 190.7 984.8 188.9 987.5 187.0C990.2 185.1 991.5 183.4 992.5 181.0C993.5 178.6 993.7 175.3 993.8 172.5C993.8 169.7 993.3 166.1 993.0 164.0C992.7 161.9 992.8 161.2 992.0 160.0C991.2 158.8 989.4 158.3 988.5 157.0C987.6 155.7 986.8 153.6 986.5 152.0C986.2 150.4 986.9 148.7 986.8 147.5C986.6 146.3 985.7 146.6 985.6 145.0C985.5 143.4 985.5 140.3 986.0 138.0C986.5 135.7 987.2 133.3 988.5 131.0C989.8 128.7 991.8 126.0 994.0 124.0C996.2 122.0 999.0 120.3 1002.0 119.0C1005.0 117.7 1009.0 116.5 1012.0 116.3C1015.0 116.0 1017.7 116.7 1020.0 117.5C1022.3 118.3 1024.3 119.7 1026.0 121.0C1027.7 122.3 1028.9 123.8 1030.0 125.5C1031.1 127.2 1031.8 129.1 1032.5 131.0C1033.2 132.9 1033.7 135.3 1034.0 137.0C1034.3 138.7 1034.6 139.7 1034.5 141.0C1034.4 142.3 1033.9 143.8 1033.5 145.0C1033.1 146.2 1032.5 146.8 1032.3 148.0C1032.1 149.2 1032.9 150.8 1032.6 152.0C1032.3 153.2 1030.8 153.7 1030.5 155.0C1030.2 156.3 1030.7 158.5 1030.6 160.0C1030.5 161.5 1029.9 162.7 1030.0 164.0C1030.1 165.3 1031.3 166.5 1031.3 168.0C1031.3 169.5 1030.9 171.5 1030.0 173.0C1029.1 174.5 1027.2 176.0 1026.0 177.0C1024.8 178.0 1023.4 177.5 1022.8 179.0C1022.2 180.5 1022.5 183.8 1022.5 186.0C1022.5 188.2 1021.6 190.2 1022.7 192.0C1023.8 193.8 1026.3 195.2 1029.0 197.0C1031.7 198.8 1035.9 201.2 1039.0 203.0C1042.1 204.8 1046.1 207.2 1047.5 208.0" fill="none" stroke="#8e8e8e" stroke-width="7" filter="url(#fb3)" opacity="0.7" transform="translate(-1.3,-0.4)"/><path d="M1046.5 270.0C1046.4 272.1 1046.1 278.3 1046.0 282.5C1045.9 286.7 1046.0 290.8 1046.0 295.0C1046.0 299.2 1046.5 303.3 1046.3 307.5C1046.1 311.7 1045.3 316.5 1045.0 320.0C1044.7 323.5 1044.3 325.4 1044.8 328.8C1045.2 332.1 1046.5 336.0 1047.5 340.0C1048.5 344.0 1049.7 348.3 1050.6 352.5C1051.5 356.7 1052.4 361.2 1053.0 365.0C1053.6 368.8 1054.1 370.8 1054.4 375.0C1054.7 379.2 1055.0 385.4 1055.0 390.0C1055.0 394.6 1054.8 398.3 1054.4 402.5C1054.0 406.7 1053.2 410.8 1052.5 415.0C1051.8 419.2 1050.8 423.3 1050.0 427.5C1049.2 431.7 1048.3 436.2 1047.5 440.0C1046.7 443.8 1045.7 446.7 1045.0 450.0C1044.3 453.3 1043.4 456.5 1043.3 460.0C1043.2 463.5 1044.0 467.2 1044.4 471.0C1044.8 474.8 1045.5 478.7 1045.6 482.5C1045.7 486.3 1045.4 490.1 1045.0 494.0C1044.6 497.9 1043.5 501.8 1043.0 506.0C1042.5 510.2 1042.2 515.3 1042.0 519.0C1041.8 522.7 1041.2 524.7 1041.5 528.0C1041.8 531.3 1042.3 536.0 1043.8 538.8C1045.2 541.5 1047.5 542.3 1050.0 544.4C1052.5 546.5 1055.8 549.1 1058.8 551.2C1061.7 553.4 1065.0 555.6 1067.5 557.5C1070.0 559.4 1072.5 560.9 1073.8 562.5C1075.0 564.1 1075.4 565.6 1075.0 567.0C1074.6 568.4 1072.7 569.9 1071.2 570.6C1069.8 571.3 1068.5 571.4 1066.2 571.0C1064.0 570.6 1060.4 569.2 1057.5 568.0C1054.6 566.8 1051.7 565.0 1048.8 563.8C1045.8 562.5 1043.1 561.2 1040.0 560.6C1036.9 560.0 1032.3 560.7 1030.0 560.0C1027.7 559.3 1027.1 557.9 1026.2 556.2C1025.4 554.6 1025.2 552.7 1025.0 550.0C1024.8 547.3 1025.3 543.3 1025.2 540.0C1025.2 536.7 1024.8 533.5 1024.4 530.0C1024.0 526.5 1023.6 523.0 1023.0 519.0C1022.4 515.0 1021.5 510.2 1020.6 506.0C1019.7 501.8 1018.3 497.9 1017.5 494.0C1016.7 490.1 1016.1 486.3 1016.0 482.5C1015.9 478.7 1016.7 474.8 1017.0 471.0C1017.3 467.2 1017.9 463.5 1018.0 460.0C1018.1 456.5 1017.9 453.3 1017.5 450.0C1017.1 446.7 1016.0 442.9 1015.5 440.0C1015.0 437.1 1015.0 436.0 1014.6 432.5C1014.2 429.0 1013.8 423.5 1013.0 418.8C1012.2 414.0 1010.8 408.1 1010.0 403.8C1009.2 399.4 1008.6 394.7 1008.2 392.5C1007.8 390.3 1007.9 390.4 1007.6 390.5C1007.3 390.6 1007.4 390.2 1006.5 393.0C1005.6 395.8 1003.8 403.0 1002.5 407.5C1001.2 412.0 999.8 416.1 998.8 420.0C997.7 423.9 996.9 427.7 996.0 431.0C995.1 434.3 994.7 436.8 993.5 440.0C992.3 443.2 990.8 446.5 989.0 450.0C987.2 453.5 984.4 457.5 982.5 461.0C980.6 464.5 978.8 467.7 977.5 471.0C976.2 474.3 975.5 477.4 975.0 481.0C974.5 484.6 974.7 488.5 974.4 492.5C974.1 496.5 973.7 500.8 973.0 505.0C972.3 509.2 970.8 513.7 970.0 517.5C969.2 521.3 968.5 524.9 968.0 528.0C967.5 531.1 967.3 532.8 967.0 536.2C966.7 539.7 966.4 544.8 966.2 548.8C966.1 552.7 966.0 556.5 966.2 560.0C966.5 563.5 966.9 566.7 967.5 570.0C968.1 573.3 969.2 577.1 970.0 580.0C970.8 582.9 971.8 585.2 972.2 587.5C972.7 589.8 973.1 592.5 972.5 594.0C971.9 595.5 970.4 596.2 968.8 596.5C967.1 596.8 964.5 596.1 962.5 596.0C960.5 595.9 959.1 596.0 957.0 595.6C954.9 595.2 951.8 594.7 950.0 593.8C948.2 592.8 947.1 591.5 946.2 590.0C945.4 588.5 944.9 587.3 944.8 585.0C944.6 582.7 945.2 578.9 945.6 576.0C946.0 573.1 946.5 570.6 947.0 567.5C947.5 564.4 948.5 561.2 948.8 557.5C949.0 553.8 948.9 549.2 948.8 545.0C948.6 540.8 948.2 536.7 948.0 532.5C947.8 528.3 947.9 525.0 947.5 520.0C947.1 515.0 946.1 507.5 945.8 502.5C945.5 497.5 945.2 494.2 945.6 490.0C946.0 485.8 946.9 481.7 948.0 477.5C949.1 473.3 951.0 469.2 952.5 465.0C954.0 460.8 955.8 456.7 957.0 452.5C958.2 448.3 959.1 445.4 959.6 440.0C960.1 434.6 960.0 425.8 960.0 420.0C960.0 414.2 959.4 410.0 959.4 405.0C959.4 400.0 959.6 395.0 960.0 390.0C960.4 385.0 961.2 379.6 962.0 375.0C962.8 370.4 964.1 366.5 965.0 362.5C965.9 358.5 967.2 354.3 967.5 351.0C967.8 347.7 967.4 345.6 967.0 342.5C966.6 339.4 965.2 336.2 965.0 332.5C964.8 328.8 965.5 323.8 966.0 320.0C966.5 316.2 968.0 313.8 968.3 310.0C968.6 306.2 968.4 301.5 968.0 297.5C967.6 293.5 966.9 289.6 966.0 286.0C965.1 282.4 963.9 279.4 962.5 276.0C961.1 272.6 958.3 267.3 957.5 265.6" fill="none" stroke="#8e8e8e" stroke-width="7" filter="url(#fb3)" opacity="0.7" transform="translate(-1.3,-0.4)"/><g fill="none" stroke="#9a9a9a" stroke-linecap="round"><path d="M995 162C1002 173 1013 179 1025 178.500" stroke-width="4" filter="url(#fb1)" opacity="0.85" stroke="#8c8c8c"/><path d="M1021 180L1019 194" stroke-width="2.500" filter="url(#fb1)" opacity="0.7"/><path d="M984 203C992 205 999 207.500 1006 209.500 1011 207 1015 204 1019 200" stroke-width="2.500" filter="url(#fb2)" opacity="0.5"/><path d="M966 246C978 254 996 256 1011 248M1018 248C1028 255 1040 256 1050 252" stroke-width="3.500" filter="url(#fb2)" opacity="0.32"/><path d="M1013 218C1014 240 1017 270 1022 300" stroke-width="3" filter="url(#fb3)" opacity="0.28"/><path d="M990 358C998 363 1005 368 1011 371.500 1016 373 1020.500 370 1021.500 364" stroke-width="2.500" filter="url(#fb1)" opacity="0.32"/><path d="M970 346C978 351 984 354 990 358" stroke-width="4" filter="url(#fb3)" opacity="0.2"/><path d="M1022 362C1028 354 1034 347 1040 341" stroke-width="3" filter="url(#fb3)" opacity="0.15"/><path d="M1022 455C1028 461 1036 461 1042 455" stroke-width="4" filter="url(#fb3)" opacity="0.35"/><path d="M972 470C968 500 966 530 962 560" stroke-width="2" filter="url(#fb2)" opacity="0.35"/><path d="M1022 480C1024 500 1028 520 1030 545" stroke-width="3" filter="url(#fb2)" opacity="0.3"/></g><g fill="#9c9c9c" filter="url(#fb1)" opacity="0.75"><ellipse cx="1018.500" cy="143" rx="4" ry="1.500"/><ellipse cx="1030.500" cy="143.500" rx="2.200" ry="1.300"/><path d="M1024 149l3 6-5 0z" opacity="0.6"/><path d="M1019 161.500c4-1 8-1 11 0l0 1.200c-4 .8-8 .8-11 0z"/><ellipse cx="990.500" cy="152" rx="2" ry="4" opacity="0.7"/></g><g fill="#ffffff" filter="url(#fb3)" opacity="0.4"><ellipse cx="1006" cy="133" rx="9" ry="10"/><ellipse cx="985" cy="222" rx="18" ry="12"/><ellipse cx="1034" cy="228" rx="9" ry="9"/><ellipse cx="990" cy="400" rx="9" ry="30"/><ellipse cx="1034" cy="410" rx="7" ry="30"/><ellipse cx="960" cy="510" rx="5" ry="30"/><ellipse cx="1035" cy="500" rx="5" ry="22"/></g><path d="M953.500 590.500L953 595M957.800 591L957.500 596M962.200 591L962.200 596.300M966.500 590.500L966.800 596.500M1064 563L1069 568.500M1067 561.500L1072 567" stroke="#6a6a6a" stroke-width="0.800" fill="none" opacity="0.65"/><circle cx="998" cy="248.800" r="1.100" fill="#fff" opacity="0.8"/><circle cx="1049.300" cy="250" r="0.900" fill="#fff" opacity="0.7"/><ellipse cx="1025.300" cy="308.800" rx="1.600" ry="1.300" fill="#aaa" filter="url(#fb1)"/><circle cx="1025.800" cy="309.800" r="0.800" fill="#fff" opacity="0.8"/></g><g clip-path="url(#cl)"><path d="M957.5 203.0C956.2 204.2 952.1 207.6 950.0 210.0C947.9 212.4 946.5 214.8 945.0 217.5C943.5 220.2 942.2 222.9 941.0 226.0C939.8 229.1 938.7 232.7 937.5 236.0C936.3 239.3 935.2 242.7 934.0 246.0C932.8 249.3 931.8 252.0 930.5 256.0C929.2 260.0 927.3 265.6 926.0 270.0C924.7 274.4 923.7 278.3 922.5 282.5C921.3 286.7 919.9 290.8 918.8 295.0C917.6 299.2 916.4 303.3 915.6 307.5C914.8 311.7 914.2 315.8 913.8 320.0C913.3 324.2 913.2 328.3 913.0 332.5C912.8 336.7 912.2 340.8 912.2 345.0C912.2 349.2 912.5 353.3 913.0 357.5C913.5 361.7 914.2 366.2 915.0 370.0C915.8 373.8 916.7 376.9 917.5 380.0C918.3 383.1 919.1 386.5 920.0 388.8C920.9 391.0 922.1 393.0 923.0 393.5C923.9 394.0 924.3 391.4 925.5 392.0C926.7 392.6 928.6 396.3 930.0 397.0C931.4 397.7 932.7 396.8 933.8 396.0C934.8 395.2 936.5 393.8 936.2 392.0C936.0 390.2 933.5 387.7 932.5 385.0C931.5 382.3 930.2 378.9 930.0 376.0C929.8 373.1 930.4 369.5 931.0 367.5C931.6 365.5 932.0 363.9 933.5 364.0C935.0 364.1 938.0 367.7 940.0 368.3C942.0 368.9 944.8 368.4 945.6 367.8C946.4 367.2 946.1 366.3 945.0 365.0C943.9 363.7 940.8 361.9 938.8 360.0C936.7 358.1 934.2 355.8 932.5 353.8C930.8 351.7 929.5 349.6 928.8 347.5C928.0 345.4 927.8 343.5 928.0 341.0C928.2 338.5 929.1 335.8 930.0 332.5C930.9 329.2 932.0 324.8 933.3 321.0C934.5 317.2 936.2 313.9 937.5 310.0C938.8 306.1 939.6 301.7 941.0 297.5C942.4 293.3 944.1 288.8 946.0 285.0C947.9 281.2 950.6 278.2 952.5 275.0C954.4 271.8 956.7 267.2 957.5 265.6" fill="none" stroke="#8e8e8e" stroke-width="5.5" filter="url(#fb2)" opacity="0.65" transform="translate(-1.3,-0.4)"/><g fill="#ffffff" filter="url(#fb3)" opacity="0.5"><ellipse cx="938" cy="262" rx="6" ry="30" transform="rotate(17 938 262)"/><ellipse cx="922" cy="340" rx="5" ry="28"/></g><path d="M926.500 396.500L921.500 384M932 398L925.500 384M935.500 395.500L929 382.500" stroke="#2a2a2c" stroke-width="1.100" fill="none" opacity="0.9" stroke-linecap="round"/></g><g clip-path="url(#cr)"><path d="M1047.5 208.0C1048.6 209.1 1052.3 212.3 1054.0 214.5C1055.7 216.7 1056.6 218.4 1057.5 221.0C1058.4 223.6 1058.9 226.8 1059.5 230.0C1060.1 233.2 1060.2 236.7 1061.0 240.0C1061.8 243.3 1062.8 246.7 1064.0 250.0C1065.2 253.3 1066.5 256.7 1068.0 260.0C1069.5 263.3 1071.2 266.7 1073.0 270.0C1074.8 273.3 1077.2 276.7 1079.0 280.0C1080.8 283.3 1082.5 286.7 1084.0 290.0C1085.5 293.3 1086.8 296.7 1088.0 300.0C1089.2 303.3 1089.8 306.5 1091.0 310.0C1092.2 313.5 1093.7 317.2 1095.0 321.0C1096.3 324.8 1097.8 329.2 1098.8 332.5C1099.8 335.8 1100.2 338.1 1101.0 341.0C1101.8 343.9 1102.9 347.2 1103.8 350.0C1104.6 352.8 1105.2 355.0 1106.0 357.5C1106.8 360.0 1108.1 362.8 1108.8 365.0C1109.4 367.2 1109.9 368.9 1109.8 371.0C1109.6 373.1 1108.7 376.2 1108.0 377.5C1107.3 378.8 1106.5 377.9 1105.6 378.8C1104.7 379.6 1103.8 381.8 1102.5 382.5C1101.2 383.2 1099.0 383.4 1097.5 383.0C1096.0 382.6 1094.3 381.3 1093.5 380.0C1092.7 378.7 1092.6 377.1 1092.5 375.0C1092.4 372.9 1093.2 370.0 1093.0 367.5C1092.8 365.0 1091.6 362.5 1091.0 360.0C1090.4 357.5 1089.9 355.2 1089.4 352.5C1088.9 349.8 1088.7 346.2 1088.0 343.8C1087.3 341.2 1086.3 340.0 1085.0 337.5C1083.7 335.0 1081.9 331.7 1080.0 328.8C1078.1 325.8 1075.8 323.0 1073.8 320.0C1071.7 317.0 1069.3 313.7 1067.5 311.0C1065.7 308.3 1064.4 306.5 1063.0 304.0C1061.6 301.5 1060.3 299.0 1059.0 296.0C1057.7 293.0 1056.5 289.0 1055.0 286.0C1053.5 283.0 1051.4 280.7 1050.0 278.0C1048.6 275.3 1047.1 271.3 1046.5 270.0" fill="none" stroke="#8e8e8e" stroke-width="5.5" filter="url(#fb2)" opacity="0.65" transform="translate(-1.3,-0.4)"/><path d="M1058 226L1066 244 1092 300 1112 370 1095 386 1085 340 1062 298 1053 272Z" fill="#9a9a9a" opacity="0.28" filter="url(#fb3)"/><g fill="#ffffff" filter="url(#fb3)" opacity="0.3"><ellipse cx="1062" cy="262" rx="5" ry="24" transform="rotate(-22 1062 262)"/><ellipse cx="1090" cy="330" rx="4" ry="22" transform="rotate(-18 1090 330)"/></g><path d="M1105.900 381L1105.300 371.500M1101 384.500L1100.600 372M1096.300 383.500L1096.200 372" stroke="#2a2a2c" stroke-width="1.100" fill="none" opacity="0.9" stroke-linecap="round"/></g>
<g transform="translate(778,87.4)"><rect x="0.4" y="0.4" width="15.2" height="15.4" fill="#19191b" stroke="#444446" stroke-width="0.9"/><path d="M4.500 3L6.500 2.400Q8 4.200 9.500 2.400L11.500 3 14 6 12 7.700 10.800 6.900V13.200H4.400V6.900L3.500 7.700 1.500 6z" fill="#c9c9c9"/><ellipse cx="3.600" cy="12.600" rx="2.300" ry="1.300" fill="#d8d8d8"/><circle cx="3.600" cy="12.600" r="0.800" fill="#222"/></g><g transform="translate(778,105.1)"><rect x="0.4" y="0.4" width="15.2" height="15.4" fill="#19191b" stroke="#444446" stroke-width="0.9"/><circle cx="7.400" cy="4.800" r="2.800" fill="#ededed"/><path d="M2.900 13.600c0-3.600 1.800-4.800 4.500-4.800s4.900 1.200 4.900 4.800z" fill="#ededed"/><ellipse cx="3.600" cy="12.600" rx="2.300" ry="1.300" fill="#d8d8d8"/><circle cx="3.600" cy="12.600" r="0.800" fill="#222"/></g><g transform="translate(778,123.3)"><rect x="0.4" y="0.4" width="15.2" height="15.4" fill="#19191b" stroke="#444446" stroke-width="0.9"/><path d="M3 6.500c1-1.500 2.500-1 3.500-2.200 2-1.800 4.500-1.800 6.400-1.300 0.400 3-0.600 6-1.600 8.500-2 1.500-6 1.500-8 0-0.600-1.800-0.600-3.500-0.300-5z" fill="#8f8f91"/><ellipse cx="7.500" cy="10.800" rx="3.600" ry="1.400" fill="none" stroke="#e2e2e2" stroke-width="0.900"/></g><g transform="translate(778,141.1)"><rect x="0.4" y="0.4" width="15.2" height="15.4" fill="#19191b" stroke="#444446" stroke-width="0.9"/><path d="M7.200 2.300c2.600 0 4.100 1.900 4.100 4.400 0 1.700-0.700 3-1.600 3.800v1.600l2.400 0.900H2.600l2.400-0.900v-1.600C4.100 9.700 3.100 8.400 3.100 6.700 3.100 4.200 4.600 2.300 7.200 2.300z" fill="#f9c98f"/><rect x="2.600" y="13" width="9.500" height="0.900" fill="#f3dcc8"/></g>
</g>
<rect x="770.7" y="80.4" width="460.6" height="543.4" fill="none" stroke="#e9e9e9" stroke-width="1.9"/>
</svg>
</body>
</html>
